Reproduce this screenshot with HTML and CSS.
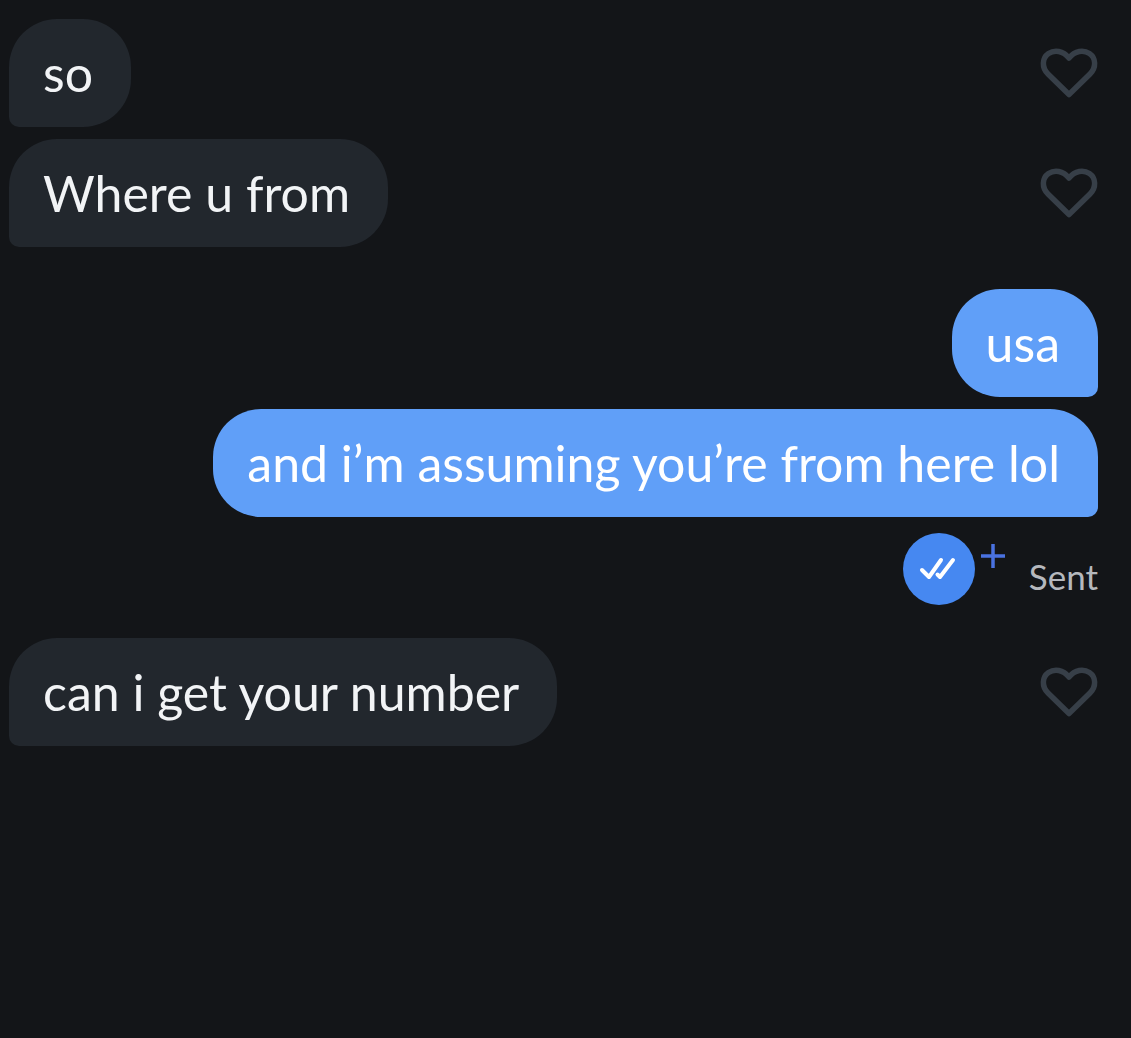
FILE: index.html
```html
<!DOCTYPE html>
<html lang="en">
<head>
    <meta charset="UTF-8">
    <title>Messages</title>
    <link rel="stylesheet" href="styles.css">
</head>
<body>
    <svg class="icon-defs" width="0" height="0">
        <symbol id="heart" viewBox="0 0 58 52">
            <path d="M29 47.5 L8 27 C1.5 20.5 2 11 8.5 6.500 C14.500 2.500 23 3.500 29 11 C35 3.500 43.500 2.500 49.500 6.500 C56 11 56.500 20.500 50 27 Z" fill="none" stroke="currentColor" stroke-width="5.500" stroke-linejoin="round"/>
        </symbol>
    </svg>
    <main class="chat">
        <div class="group">
            <div class="row">
                <div class="bubble them">so</div>
                <svg class="heart"><use href="#heart"></use></svg>
            </div>
            <div class="row">
                <div class="bubble them">Where u from</div>
                <svg class="heart"><use href="#heart"></use></svg>
            </div>
        </div>

        <div class="group mine">
            <div class="row">
                <div class="bubble me">usa</div>
            </div>
            <div class="row">
                <div class="bubble me">and i’m assuming you’re from here lol</div>
            </div>
            <div class="status">
                <div class="receipt">
                    <svg viewBox="0 0 72 72" width="72" height="72">
                        <path d="M19 37 L26 44 L38 27 M34.500 41.500 L37 44 L50 27" fill="none" stroke="#fff" stroke-width="4" stroke-linecap="round" stroke-linejoin="round"/>
                    </svg>
                </div>
                <svg class="plus" viewBox="0 0 24 24" width="24" height="24">
                    <path d="M12 0 V24 M0 12 H24" stroke="#4a72e0" stroke-width="3.500"/>
                </svg>
                <span class="sent">Sent</span>
            </div>
        </div>

        <div class="group">
            <div class="row">
                <div class="bubble them">can i get your number</div>
                <svg class="heart"><use href="#heart"></use></svg>
            </div>
        </div>
    </main>
</body>
</html>
```

FILE: styles.css
```css
html, body {
    height: 100%;
}

body {
    margin: 0;
    background-color: #131518;
    font-family: Lato, "Open Sans", sans-serif;
    color: #f2f4f6;
}

.icon-defs {
    position: absolute;
}

.chat {
    display: flex;
    flex-direction: column;
    padding: 19px 33px 0 9px;
}

.group {
    display: flex;
    flex-direction: column;
    gap: 12px;
}

.mine {
    margin-top: 42px;
}

.row {
    display: flex;
    justify-content: space-between;
    align-items: center;
}

.mine .row {
    justify-content: flex-end;
}

.bubble {
    box-sizing: border-box;
    height: 108px;
    display: flex;
    align-items: center;
    font-size: 50px;
    white-space: nowrap;
}

.them {
    padding: 0 38px 0 34px;
    background-color: #22272d;
    border-radius: 48px 48px 48px 10px;
}

.me {
    padding: 0 38px 0 34px;
    background-color: #609ff8;
    color: #fff;
    border-radius: 48px 48px 10px 48px;
}

.heart {
    width: 58px;
    height: 52px;
    color: #373f48;
}

.status {
    display: flex;
    justify-content: flex-end;
    align-items: flex-start;
    height: 72px;
    margin-top: 4px;
    margin-bottom: 33px;
}

.receipt {
    width: 72px;
    height: 72px;
    border-radius: 50%;
    background-color: #4688f1;
}

.receipt svg {
    display: block;
}

.plus {
    margin: 11px 0 0 6px;
}

.sent {
    margin: 22px 0 0 24px;
    font-size: 35px;
    line-height: 42px;
    color: #b5b8bd;
}
```
